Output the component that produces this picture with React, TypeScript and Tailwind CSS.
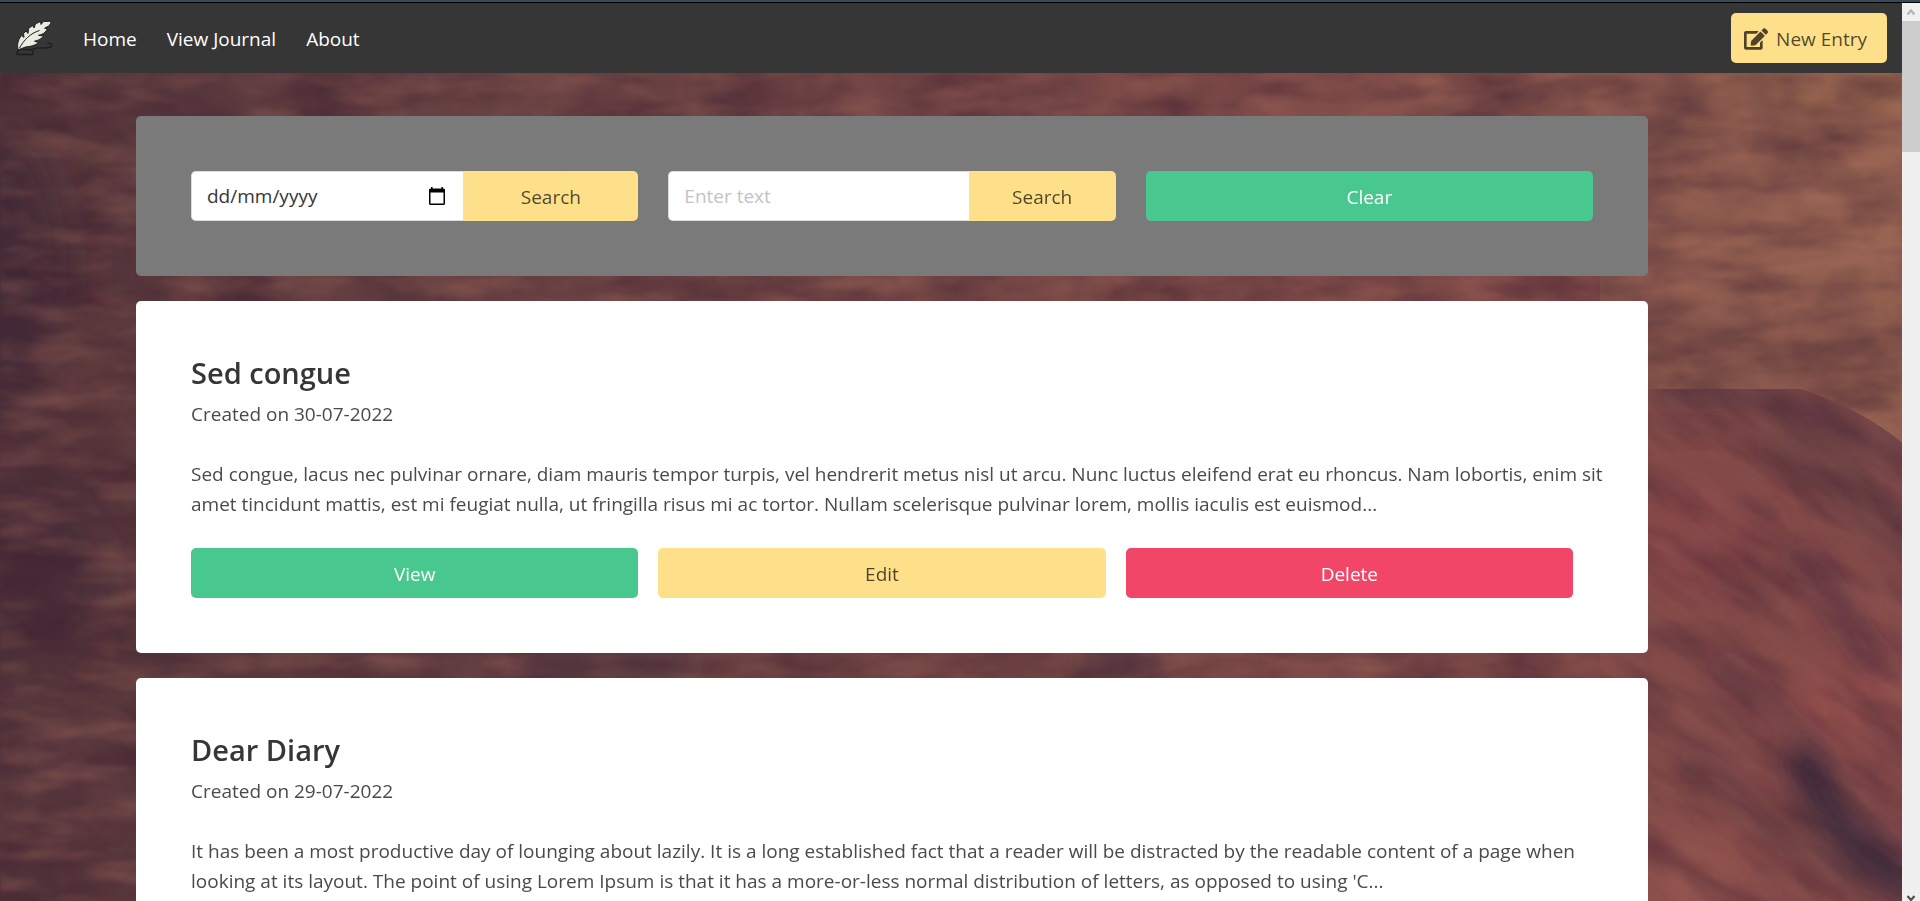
import type { ReactNode } from "react";
import { FaEdit } from "react-icons/fa";

type Entry = { title: string; created: string; excerpt: string };

const entries: Entry[] = [
  {
    title: "Sed congue",
    created: "30-07-2022",
    excerpt:
      "Sed congue, lacus nec pulvinar ornare, diam mauris tempor turpis, vel hendrerit metus nisl ut arcu. Nunc luctus eleifend erat eu rhoncus. Nam lobortis, enim sit amet tincidunt mattis, est mi feugiat nulla, ut fringilla risus mi ac tortor. Nullam scelerisque pulvinar lorem, mollis iaculis est euismod...",
  },
  {
    title: "Dear Diary",
    created: "29-07-2022",
    excerpt:
      "It has been a most productive day of lounging about lazily. It is a long established fact that a reader will be distracted by the readable content of a page when looking at its layout. The point of using Lorem Ipsum is that it has a more-or-less normal distribution of letters, as opposed to using 'C...",
  },
];

function QuillLogo() {
  return (
    <svg viewBox="0 0 38 36" className="h-9 w-[38px]" aria-hidden="true">
      <path
        d="M2 34.500C2 31.500 3 30 5 29.500C10 29.600 16 29.300 18 30L17.500 34.500ZM18 29.500C19 27.500 24 28 29 28C34 28 37.500 27 36.500 24.500C36 23 34 22.800 32 23.500"
        fill="none"
        stroke="#1e1e1e"
        strokeWidth="1.300"
      />
      <path
        d="M3 29.500C1.800 24 3.500 18.500 6.800 15.500L9 17.500L8.600 13.500L11 11L13 13.500L13.600 8.500L17.500 5.500L19 8L20.500 3.800L25.500 1.500L26 4.500L28.500 1.500L35.500 1.200C36.500 2 35.500 4.500 33.500 6L29.500 8.300L32.500 8.500C31.500 11 29.500 13.500 26 14.700L23.500 15.300L28.500 16C26.500 19 23.500 20.300 19.500 21.200L23.500 22.500C20 26 14 26.500 10.500 27C7.500 28 5.500 29.300 3 29.500Z"
        fill="#ecebe0"
        stroke="#1e1e1e"
        strokeWidth="1"
        strokeLinejoin="round"
      />
      <path d="M4.500 28C9 20 15 13.500 24.500 10.500" fill="none" stroke="#1e1e1e" strokeWidth="1" />
    </svg>
  );
}

function CalendarIcon() {
  return (
    <svg viewBox="0 0 16 18" className="h-[18px] w-4" aria-hidden="true">
      <path
        d="M2 0h1.600v1.500h8.800V0H14v1.500h.5Q16 1.500 16 3v13.500Q16 18 14.500 18h-13Q0 18 0 16.500V3Q0 1.500 1.500 1.500H2ZM1.500 5.500v11h13v-11Z"
        fill="#000"
      />
    </svg>
  );
}

function WoodBackground() {
  return (
    <svg
      className="absolute inset-0 -z-10 h-full w-full"
      viewBox="0 0 1902 828"
      preserveAspectRatio="xMidYMid slice"
      aria-hidden="true"
    >
      <defs>
        <linearGradient id="base" x1="0" x2="1" y1="0" y2="0">
          <stop offset="0" stopColor="#55363b" />
          <stop offset="0.250" stopColor="#684243" />
          <stop offset="0.600" stopColor="#7d4b48" />
          <stop offset="0.800" stopColor="#804a48" />
          <stop offset="1" stopColor="#834a4a" />
        </linearGradient>
        <linearGradient id="upper" x1="0" x2="1" y1="0" y2="0">
          <stop offset="0" stopColor="#8f5f4e" stopOpacity="0" />
          <stop offset="0.500" stopColor="#8f5f50" stopOpacity="0.650" />
          <stop offset="1" stopColor="#986652" stopOpacity="0.850" />
        </linearGradient>
        <filter id="soft" x="-30%" y="-30%" width="160%" height="160%">
          <feGaussianBlur stdDeviation="24" />
        </filter>
        <filter id="streak" filterUnits="userSpaceOnUse" x="-100" y="-100" width="2200" height="1100">
          <feGaussianBlur stdDeviation="13" />
        </filter>
        <filter id="darkGrain" x="0" y="0" width="100%" height="100%" colorInterpolationFilters="sRGB">
          <feTurbulence type="fractalNoise" baseFrequency="0.010 0.034" numOctaves="4" seed="4" />
          <feColorMatrix values="0 0 0 0 0.230  0 0 0 0 0.110  0 0 0 0 0.180  2.200 0 0 0 -0.950" />
          <feGaussianBlur stdDeviation="1.500" />
        </filter>
        <filter id="lightGrain" x="0" y="0" width="100%" height="100%" colorInterpolationFilters="sRGB">
          <feTurbulence type="fractalNoise" baseFrequency="0.012 0.045" numOctaves="4" seed="11" />
          <feColorMatrix values="0 0 0 0 0.700  0 0 0 0 0.460  0 0 0 0 0.390  0 2.200 0 0 -1" />
          <feGaussianBlur stdDeviation="1.500" />
        </filter>
        <filter id="blotch" x="0" y="0" width="100%" height="100%" colorInterpolationFilters="sRGB">
          <feTurbulence type="fractalNoise" baseFrequency="0.011 0.009" numOctaves="4" seed="7" />
          <feColorMatrix values="0 0 0 0 0.220  0 0 0 0 0.120  0 0 0 0 0.190  2.400 0 0 0 -1" />
        </filter>
        <clipPath id="plain">
          <path d="M0 0H1902V370Q1860 335 1800 316H1600V828H0Z" />
        </clipPath>
        <clipPath id="knot">
          <path d="M1600 316H1800Q1860 335 1902 370V828H1600Z" />
        </clipPath>
      </defs>
      <rect width="1902" height="828" fill="url(#base)" />
      <g clipPath="url(#plain)">
        <path d="M1250 0H1902V370Q1860 335 1800 316H1600V200H1250Z" fill="url(#upper)" />
      </g>
      <g filter="url(#soft)">
        <ellipse cx="0" cy="200" rx="60" ry="140" fill="#402936" opacity="0.700" />
        <ellipse cx="20" cy="500" rx="90" ry="90" fill="#412b37" opacity="0.400" />
        <ellipse cx="90" cy="320" rx="50" ry="60" fill="#6d4143" opacity="0.450" />
        <ellipse cx="60" cy="720" rx="70" ry="80" fill="#643b3f" opacity="0.500" />
        <ellipse cx="1690" cy="470" rx="70" ry="60" fill="#8b4648" opacity="0.600" />
        <ellipse cx="1860" cy="640" rx="70" ry="50" fill="#9a524f" opacity="0.700" />
        <ellipse cx="1690" cy="800" rx="70" ry="50" fill="#965650" opacity="0.700" />
        <ellipse cx="1840" cy="10" rx="120" ry="14" fill="#a87850" opacity="0.700" />
      </g>
      <g clipPath="url(#plain)">
        <rect width="1902" height="828" filter="url(#blotch)" opacity="0.350" />
        <rect width="1902" height="828" filter="url(#darkGrain)" opacity="0.450" />
        <rect width="1902" height="828" filter="url(#lightGrain)" opacity="0.350" />
      </g>
      <g filter="url(#streak)" fill="none" stroke="#3b273a" strokeLinecap="round">
        <path d="M540 592H680M1090 592H1150" strokeWidth="26" opacity="0.550" />
      </g>
      <g clipPath="url(#knot)">
        <g filter="url(#streak)" fill="none" stroke="#3b273a" strokeLinecap="round">
          <path d="M1660 316C1760 310 1830 340 1910 390" strokeWidth="26" opacity="0.550" />
          <path d="M1790 370C1830 400 1870 430 1920 470" strokeWidth="50" opacity="0.300" />
          <path d="M1800 485C1830 510 1840 550 1880 590" strokeWidth="26" opacity="0.450" />
          <path d="M1720 590C1770 620 1790 650 1830 700" strokeWidth="18" opacity="0.450" />
          <path d="M1805 690C1825 740 1850 775 1930 825" strokeWidth="42" opacity="0.900" />
          <path d="M1690 690C1740 720 1760 750 1860 810" strokeWidth="18" opacity="0.500" />
        </g>
        <g transform="rotate(35 1750 500)">
          <rect x="1200" y="0" width="1100" height="1100" filter="url(#darkGrain)" opacity="0.400" />
          <rect x="1200" y="0" width="1100" height="1100" filter="url(#lightGrain)" opacity="0.180" />
        </g>
      </g>
    </svg>
  );
}

const tones = {
  green: "bg-[#48c78e] text-white",
  yellow: "bg-[#ffe08a] text-black/70",
  red: "bg-[#f14668] text-white",
};

function Button({ tone, className = "", children }: { tone: keyof typeof tones; className?: string; children: ReactNode }) {
  return (
    <button type="button" className={`flex h-[50px] items-center justify-center rounded-[5px] pt-px ${tones[tone]} ${className}`}>
      {children}
    </button>
  );
}

function Navbar() {
  return (
    <nav className="flex h-[70px] shrink-0 items-center justify-between bg-[#363636] px-[15px] text-white">
      <div className="flex items-center">
        <a href="#" aria-label="Journal" className="mr-[30px] flex">
          <QuillLogo />
        </a>
        <div className="flex gap-[30px] pt-0.5">
          <a href="#home">Home</a>
          <a href="#journal">View Journal</a>
          <a href="#about">About</a>
        </div>
      </div>
      <Button tone="yellow" className="gap-2 pr-5 pl-[13px]">
        <FaEdit className="size-6" />
        New Entry
      </Button>
    </nav>
  );
}

function SearchPanel() {
  return (
    <section className="grid grid-cols-3 gap-[30px] rounded-[5px] bg-[#7a7a7a] p-[55px]">
      <form className="flex">
        <div className="flex h-[50px] min-w-0 flex-1 items-center rounded-l-[5px] border border-r-0 border-[#dbdbdb] bg-white pr-[18px] pl-[15px]">
          <input
            type="text"
            aria-label="Entry date"
            placeholder="dd/mm/yyyy"
            className="h-full min-w-0 flex-1 outline-none placeholder:text-[#363636]"
          />
          <button type="button" aria-label="Choose date">
            <CalendarIcon />
          </button>
        </div>
        <Button tone="yellow" className="w-[175px] rounded-l-none">Search</Button>
      </form>
      <form className="flex">
        <input
          type="text"
          aria-label="Search text"
          placeholder="Enter text"
          className="h-[50px] min-w-0 flex-1 rounded-l-[5px] border border-r-0 border-[#dbdbdb] bg-white px-[15px] outline-none placeholder:text-[#c3c3c3]"
        />
        <Button tone="yellow" className="w-[147px] rounded-l-none">Search</Button>
      </form>
      <Button tone="green">Clear</Button>
    </section>
  );
}

function EntryCard({ entry }: { entry: Entry }) {
  return (
    <article className="rounded-[5px] bg-white p-[55px]">
      <h2 className="text-[29px] leading-[34px] font-semibold text-[#363636]">{entry.title}</h2>
      <p className="mt-[9px]">Created on {entry.created}</p>
      <p className="mt-[30px] -mr-4">{entry.excerpt}</p>
      <div className="mt-[29px] mr-5 grid grid-cols-3 gap-5">
        <Button tone="green">View</Button>
        <Button tone="yellow">Edit</Button>
        <Button tone="red">Delete</Button>
      </div>
    </article>
  );
}

function ScrollTrack() {
  return (
    <div className="flex w-[18px] shrink-0 flex-col items-center bg-[#f0f0f0]" aria-hidden="true">
      <svg viewBox="0 0 18 18" className="size-[18px] shrink-0">
        <path d="M5.500 11.500L9 7.500L12.500 11.500" fill="none" stroke="#b5b5b5" strokeWidth="2.200" />
      </svg>
      <div className="h-[131px] w-full bg-[#cdcdcd]" />
      <svg viewBox="0 0 18 9" className="mt-auto h-[9px] w-[18px] shrink-0">
        <path d="M5.500 4L9 8L12.500 4" fill="none" stroke="#505050" strokeWidth="2.200" />
      </svg>
    </div>
  );
}

export default function App() {
  return (
    <div className="flex h-screen flex-col overflow-hidden border-t-2 border-[#3b4856] font-['Open_Sans','Noto_Sans',sans-serif] text-[19px] leading-[30px] text-[#4a4a4a]">
      <div className="flex min-h-0 flex-1 border-t border-black">
        <div className="flex min-w-0 flex-1 flex-col">
          <Navbar />
          <div className="relative isolate flex min-h-0 flex-1 flex-col">
            <WoodBackground />
            <main className="min-h-0 flex-1 overflow-y-auto pt-[43px] pr-[254px] pb-[43px] pl-[136px] [scrollbar-width:none]">
              <div className="flex flex-col gap-[25px]">
                <SearchPanel />
                {entries.map((entry) => (
                  <EntryCard key={entry.title} entry={entry} />
                ))}
              </div>
            </main>
          </div>
        </div>
        <ScrollTrack />
      </div>
    </div>
  );
}
